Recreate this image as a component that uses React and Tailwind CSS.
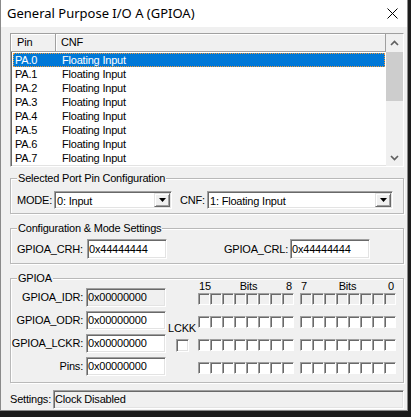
import React from "react";

const sunken =
  "border border-t-[#a0a0a0] border-l-[#a0a0a0] border-b-white border-r-white shadow-[inset_1px_1px_0_#696969,inset_-1px_-1px_0_#e3e3e3]";
const raised =
  "border border-t-[#e3e3e3] border-l-[#e3e3e3] border-b-[#696969] border-r-[#696969] shadow-[inset_1px_1px_0_#fff,inset_-1px_-1px_0_#a0a0a0]";

function Group({ label, className, children }) {
  return (
    <div
      className={`relative border border-[#b9b9b9] shadow-[inset_1px_1px_0_#fff,1px_1px_0_#fff] ${className}`}
    >
      <span className="absolute left-[6px] top-[-7px] bg-[#f0f0f0] px-[1px] leading-[13px] whitespace-nowrap">
        {label}
      </span>
      {children}
    </div>
  );
}

function Select({ value, w }) {
  return (
    <div className={`${w} h-[18px] bg-white ${sunken} p-[1px] flex items-stretch`}>
      <span className="pl-[1px] leading-[16px] whitespace-nowrap">{value}</span>
      <div className={`ml-auto w-[16px] bg-[#f0f0f0] ${raised} flex items-center justify-center`}>
        <svg width="7" height="4" viewBox="0 0 7 4">
          <path d="M0 0H7L3.5 4Z" fill="#000" />
        </svg>
      </div>
    </div>
  );
}

function Field({ value, w = "w-[80px]", h = "h-[19px]", gray = false }) {
  return (
    <div
      className={`${w} ${h} ${gray ? "bg-[#f0f0f0]" : "bg-white"} ${sunken} pl-[1px] flex items-center whitespace-nowrap`}
    >
      {value}
    </div>
  );
}

function Box({ gray }) {
  return (
    <div
      className={`w-[12px] h-[12px] ${gray ? "bg-[#f0f0f0]" : "bg-white"} border border-t-[#a0a0a0] border-l-[#a0a0a0] border-b-white border-r-white shadow-[inset_1px_1px_0_#696969]`}
    />
  );
}

function BoxRow({ gray, className = "" }) {
  const eight = Array.from({ length: 8 });
  return (
    <div className={`flex gap-[6px] ${className}`}>
      <div className="flex">
        {eight.map((_, i) => (
          <Box key={i} gray={gray} />
        ))}
      </div>
      <div className="flex">
        {eight.map((_, i) => (
          <Box key={i} gray={gray} />
        ))}
      </div>
    </div>
  );
}

function Chevron({ down }) {
  return (
    <svg width="9" height="6" viewBox="0 0 9 6">
      <path
        d={down ? "M1 1L4.5 4.5L8 1" : "M1 5L4.5 1.5L8 5"}
        stroke="#606060"
        strokeWidth="1.7"
        fill="none"
      />
    </svg>
  );
}

export default function App() {
  const rows = Array.from({ length: 8 }, (_, i) => `PA.${i}`);
  const regs = [
    ["GPIOA_IDR:", true],
    ["GPIOA_ODR:", false],
    ["GPIOA_LCKR:", false],
    ["Pins:", false],
  ];
  return (
    <div className="w-[411px] h-[417px] bg-[#1c1c1c] font-['Liberation_Sans',Arial,sans-serif] text-[11px] tracking-[-0.2px] text-black overflow-hidden">
      <div className="w-[408px] h-[411px] bg-[#f0f0f0] border-x border-b border-[#8a8a8a] flex flex-col">
        {/* title bar */}
        <div className="h-[27px] bg-white flex items-center shrink-0">
          <span className="ml-[6px] font-['Noto_Sans',sans-serif] text-[13px] tracking-normal whitespace-nowrap">
            General Purpose I/O A (GPIOA)
          </span>
          <svg className="ml-auto mr-[9px]" width="11" height="11" viewBox="0 0 11 11">
            <path d="M0.5 0.5L10.5 10.5M10.5 0.5L0.5 10.5" stroke="#000" strokeWidth="1" />
          </svg>
        </div>

        <div className="pl-[9px] pr-[3px] flex flex-col">
          {/* list view */}
          <div className={`mt-[6px] h-[134px] bg-white ${sunken} flex`}>
            <div className="flex-1 flex flex-col">
              <div className="h-[18px] flex bg-[#f0f0f0]">
                <div className="w-[45px] pl-[6px] leading-[17px] border-r border-b border-[#a0a0a0] shadow-[inset_1px_1px_0_#fff]">
                  Pin
                </div>
                <div className="flex-1 pl-[5px] leading-[17px] border-r border-b border-[#a0a0a0] shadow-[inset_1px_1px_0_#fff]">
                  CNF
                </div>
              </div>
              <div className="pt-[1px] pl-[2px] pr-[1px] flex flex-col">
                {rows.map((r, i) => (
                  <div
                    key={r}
                    className={`h-[14px] flex items-center pl-[1px] border ${
                      i === 0
                        ? "bg-[#0078d7] text-white border-dotted border-[#f09a3a]"
                        : "border-transparent"
                    }`}
                  >
                    <span className="w-[47px]">{r}</span>
                    <span>Floating Input</span>
                  </div>
                ))}
              </div>
            </div>
            <div className="w-[17px] bg-[#f0f0f0] flex flex-col">
              <div className="h-[17px] flex items-center justify-center">
                <Chevron />
              </div>
              <div className="mt-[1px] h-[49px] bg-[#cdcdcd]" />
              <div className="flex-1" />
              <div className="h-[17px] flex items-center justify-center">
                <Chevron down />
              </div>
            </div>
          </div>

          {/* Selected port pin configuration */}
          <Group label="Selected Port Pin Configuration" className="mt-[11px] h-[36px] pt-[12px] pl-[6px] flex items-start">
            <span className="w-[37px] leading-[18px]">MODE:</span>
            <Select value="0: Input" w="w-[118px]" />
            <span className="ml-[8px] w-[27px] leading-[18px]">CNF:</span>
            <Select value="1: Floating Input" w="w-[186px]" />
          </Group>

          {/* Configuration & Mode settings */}
          <Group label="Configuration & Mode Settings" className="mt-[14px] h-[36px] pt-[10px] pl-[6px] flex items-start">
            <span className="w-[70px] leading-[20px] whitespace-nowrap">GPIOA_CRH:</span>
            <Field value="0x44444444" h="h-[20px]" />
            <span className="ml-[57px] w-[66px] leading-[20px] whitespace-nowrap">GPIOA_CRL:</span>
            <Field value="0x44444444" h="h-[20px]" />
          </Group>

          {/* GPIOA */}
          <Group label="GPIOA" className="mt-[14px] h-[105px] flex items-start">
            <div className="pt-[9px] flex flex-col gap-[4px]">
              {regs.map(([l, g]) => (
                <div key={l} className="flex items-center h-[19px]">
                  <span className="w-[72px] text-right whitespace-nowrap">{l}</span>
                  <div className="ml-[3px]">
                    <Field value="0x00000000" gray={g} />
                  </div>
                </div>
              ))}
            </div>
            <div className="ml-[2px] w-[28px] pt-[43px] flex flex-col">
              <span className="leading-[13px] whitespace-nowrap">LCKK</span>
              <div className={`mt-[4px] ml-[8px] w-[13px] h-[13px] bg-white ${sunken}`} />
            </div>
            <div className="ml-[2px] pt-[1px] flex flex-col">
              <div className="flex gap-[6px] leading-[13px]">
                <div className="w-[96px] pl-[1px] pr-[2px] flex justify-between">
                  <span>15</span>
                  <span>Bits</span>
                  <span>8</span>
                </div>
                <div className="w-[96px] pl-[1px] pr-[2px] flex justify-between">
                  <span>7</span>
                  <span>Bits</span>
                  <span>0</span>
                </div>
              </div>
              <BoxRow gray />
              <BoxRow className="mt-[11px]" />
              <BoxRow className="mt-[11px]" />
              <BoxRow className="mt-[11px]" />
            </div>
          </Group>

          {/* settings */}
          <div className="mt-[7px] flex items-center h-[19px]">
            <span className="w-[43px] whitespace-nowrap">Settings:</span>
            <Field value="Clock Disabled" w="flex-1" gray />
          </div>
        </div>
      </div>
    </div>
  );
}
